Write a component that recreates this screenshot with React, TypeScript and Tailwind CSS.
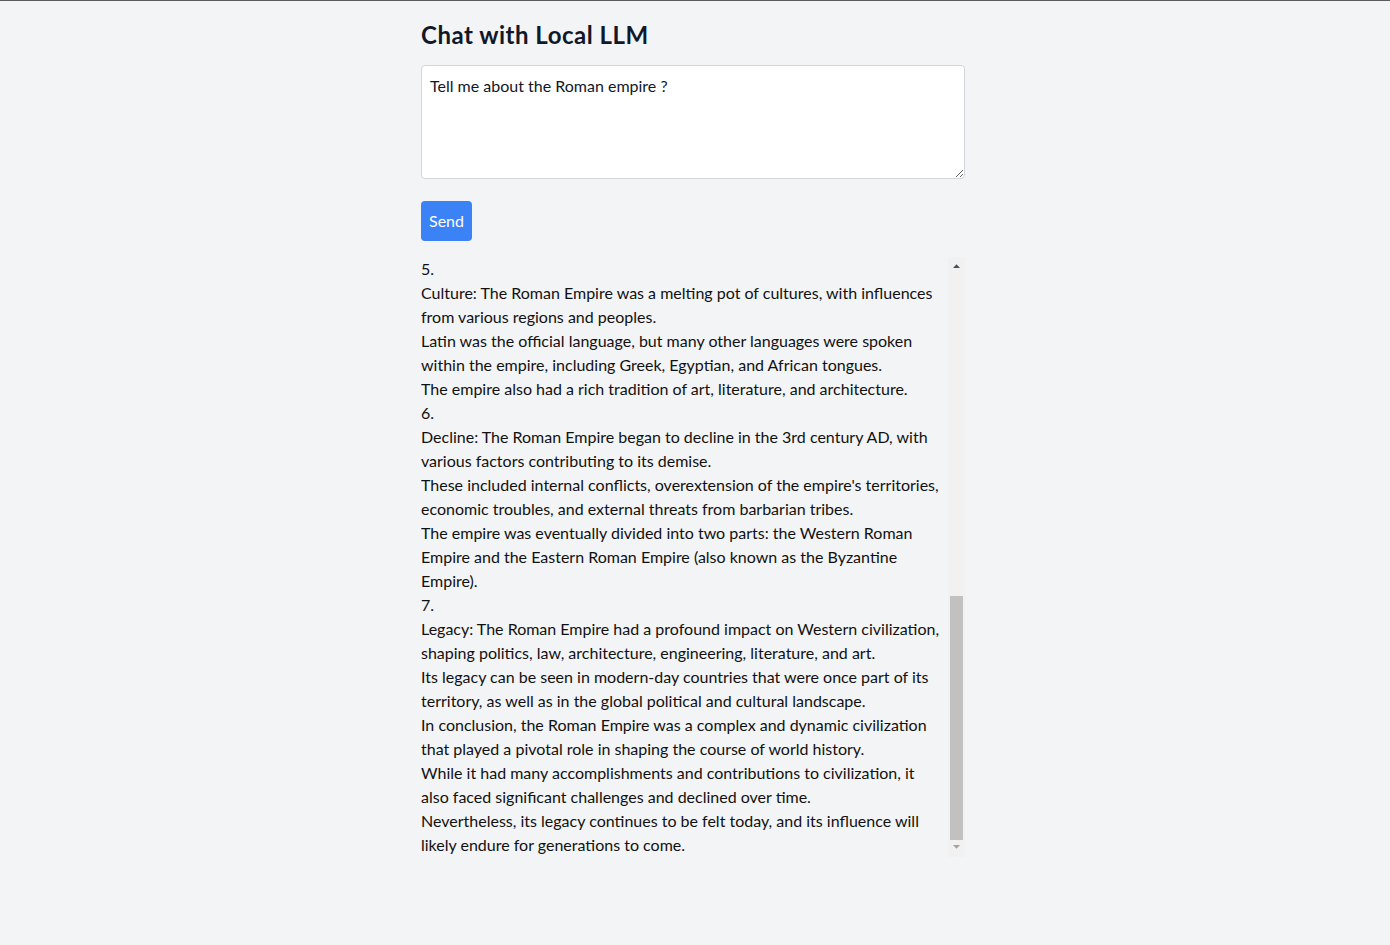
const response = `5.
Culture: The Roman Empire was a melting pot of cultures, with influences from various regions and peoples.
Latin was the official language, but many other languages were spoken within the empire, including Greek, Egyptian, and African tongues.
The empire also had a rich tradition of art, literature, and architecture.
6.
Decline: The Roman Empire began to decline in the 3rd century AD, with various factors contributing to its demise.
These included internal conflicts, overextension of the empire's territories, economic troubles, and external threats from barbarian tribes.
The empire was eventually divided into two parts: the Western Roman Empire and the Eastern Roman Empire (also known as the Byzantine Empire).
7.
Legacy: The Roman Empire had a profound impact on Western civilization, shaping politics, law, architecture, engineering, literature, and art.
Its legacy can be seen in modern-day countries that were once part of its territory, as well as in the global political and cultural landscape.
In conclusion, the Roman Empire was a complex and dynamic civilization that played a pivotal role in shaping the course of world history.
While it had many accomplishments and contributions to civilization, it also faced significant challenges and declined over time.
Nevertheless, its legacy continues to be felt today, and its influence will likely endure for generations to come.`;

function Scrollbar() {
  return (
    <div className="w-[17px] h-full flex flex-col bg-[#f1f1f1]">
      <div className="h-[17px] flex items-start justify-center pt-[7px]">
        <svg width="7" height="4" viewBox="0 0 7 4">
          <polygon points="0,4 3.5,0.3 7,4" fill="#505050" />
        </svg>
      </div>
      <div className="flex-1 flex flex-col justify-end">
        <div className="h-[244px] ml-[2px] mr-[2px] bg-[#c1c1c1]" />
      </div>
      <div className="h-[17px] flex items-start justify-center pt-[5px]">
        <svg width="7" height="4" viewBox="0 0 7 4">
          <polygon points="0,0 7,0 3.5,3.7" fill="#a3a3a3" />
        </svg>
      </div>
    </div>
  );
}

export default function App() {
  return (
    <div
      className="min-h-screen bg-[#f3f4f6] border-t border-[#5a5a5a] text-gray-900"
      style={{ fontFamily: "Lato, 'Noto Sans', sans-serif" }}
    >
      <div className="flex justify-center pr-[4px]">
        <div className="w-[544px] pt-[18px]">
          <h1 className="text-2xl leading-8 font-bold tracking-[0.5px] text-[#111827] mb-[14px]">
            Chat with Local LLM
          </h1>
          <textarea
            rows={4}
            defaultValue="Tell me about the Roman empire ?"
            className="block w-full p-2 text-base leading-6 border border-gray-300 rounded bg-white text-gray-900 outline-none"
          />
          <button className="mt-[22px] px-2 py-2 bg-[#3b82f6] text-white text-base leading-6 rounded">
            Send
          </button>
          <div className="mt-4 h-[600px] flex">
            <div className="w-[521px] overflow-hidden whitespace-pre-line text-base leading-6 text-[#111]">
              {response}
            </div>
            <div className="flex-1" />
            <Scrollbar />
          </div>
        </div>
      </div>
    </div>
  );
}
